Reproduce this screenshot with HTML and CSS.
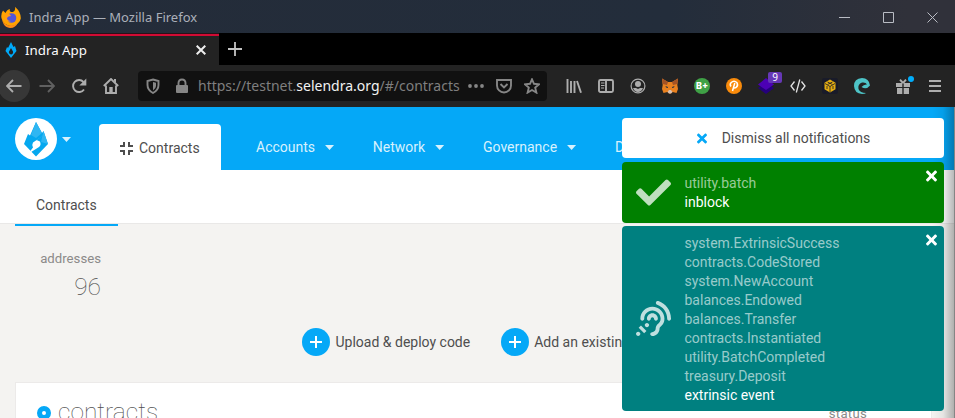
FILE: index.html
```html
<!DOCTYPE html>
<html lang="en">
<head>
<meta charset="utf-8">
<title>Indra App</title>
<link rel="stylesheet" href="styles.css">
</head>
<body>
<div class="window">
  <header class="titlebar">
    <svg class="firefox" viewBox="0 0 22 22"><path d="M3 3.500 5.500 6Q7 2.500 10 2 9 4 11 5 16 5 15-.2 21 5 20.800 11.500A9.900 9.900 0 1 1 3 3.500Z" fill="#ffa300"/><path d="M2 6Q.8 15 7 18 15 20 18 15 16 21 10 21 1 20 2 6Z" fill="#ff8d16"/><circle cx="11.500" cy="11" r="4.800" fill="#5355d9"/><path d="M5 8Q9 5 11 9 8 9 7 11 7 14 11 14 6 16 5 12Z" fill="#ff9c14"/></svg>
    <span class="window-title">Indra App — Mozilla Firefox</span>
    <div class="window-buttons">
      <svg viewBox="0 0 12 12"><path d="M0 6.500h11"/></svg>
      <svg viewBox="0 0 12 12"><path d="M.5 1.500h10v10H.5z"/></svg>
      <svg viewBox="0 0 12 12"><path d="M.5 1.500l10 10M10.500 1.500l-10 10"/></svg>
    </div>
  </header>
  <div class="tabs">
    <div class="tab">
      <svg class="favicon" viewBox="0 0 12 16"><path fill-rule="evenodd" d="M6 0 8.500 5 10 4 11.500 9 6 16 .5 9 2 5 3 6ZM6 6 3.800 10Q4 12 6 12.500 8.500 12 8 9.500Z" fill="#00aaf8"/></svg>
      <span>Indra App</span>
      <svg class="tab-close" viewBox="0 0 10 10"><path d="M.7.700l8.600 8.600M9.300.700.700 9.300"/></svg>
    </div>
    <svg class="new-tab" viewBox="0 0 14 14"><path d="M7 0v14M0 7h14"/></svg>
  </div>
  <div class="toolbar">
    <div class="back"><svg class="ic" viewBox="0 0 16 16"><path d="M15.500 8H1M7 2 1 8l6 6"/></svg></div>
    <div class="cell"><svg class="ic dim" viewBox="0 0 16 16"><path d="M.5 8H15M9 2l6 6-6 6"/></svg></div>
    <div class="cell"><svg class="ic" viewBox="0 0 16 16"><path d="M13 11.500A6 6 0 1 1 12.500 4"/><path class="solid" d="M15.300.500v7H8.300z"/></svg></div>
    <div class="cell"><svg class="ic" viewBox="0 0 16 16"><path d="M.8 8 8 1l7.200 7M3 7.500V15h10V7.500"/><path class="solid" d="M6.300 9h3.400v6H6.300zM11 1h2v4l-2-2z"/></svg></div>
    <div class="urlbar">
      <svg class="ic shield" viewBox="0 0 16 16"><path d="M8 1.500 13.500 3v4q0 5-5.500 8-5.500-3-5.500-8V3z"/><path class="solid" d="M8 4l3 .8V8q0 2.500-3 4.500z"/></svg>
      <svg class="ic lock" viewBox="0 0 16 16"><path d="M4.500 7V5q0-3.500 3.500-3.500T11.500 5v2"/><rect class="solid" x="2" y="7" width="12" height="8" rx="1"/></svg>
      <span class="url">https://testnet.<b>selendra.org</b>/#/contracts</span>
      <svg class="ic dots" viewBox="0 0 16 16"><g class="solid"><circle cx="2" cy="8" r="1.900"/><circle cx="8" cy="8" r="1.900"/><circle cx="14" cy="8" r="1.900"/></g></svg>
      <svg class="ic pocket" viewBox="0 0 16 16"><path d="M1 2h14v5.500a7 7 0 0 1-14 0zM4.500 6 8 9.500 11.500 6"/></svg>
      <svg class="ic star" viewBox="0 0 16 16"><path d="M8 1.300l2 4.500 5 .5-3.800 3.300 1.200 5L8 12l-4.400 2.600 1.200-5L1 6.300l5-.5z"/></svg>
    </div>
    <div class="extensions">
      <div class="cell"><svg class="ic" viewBox="0 0 16 16"><path d="M1.500 1v14M5 3v12M8.500 3v12M11 3l4 11.700"/></svg></div>
      <div class="cell"><svg class="ic" viewBox="0 0 16 16"><rect x="1" y="2" width="14" height="12" rx="1.500"/><path d="M8 2v12"/><path class="thin" d="M3 5h3.500M3 7.500h3.500M3 10h3"/></svg></div>
      <div class="cell"><svg class="ic" viewBox="0 0 16 16"><circle class="thin" cx="8" cy="8" r="6.900"/><circle class="solid" cx="8" cy="6" r="3"/><path class="solid" d="M3 10h3l2 1 2-1h3q-1.500 4-5 4t-5-4z"/></svg></div>
      <div class="cell"><svg class="ic" viewBox="0 0 16 16"><g stroke="none"><path d="M0 .5 6 4h4l6-3.500-.7 6.500.7 4-1.500 4-4-1L9 15.500H7L5.500 14l-4 1L0 11l.7-4z" fill="#e9811f"/><path d="M0 .5 6 4 5 7 .8 6zM16 .5 10 4l1 3 4.200-1z" fill="#a45325"/><path d="M5.500 14 7 12h2l1.500 2L9 15.500H7z" fill="#d5bfb2"/><path d="M3.500 8 6 9v1L4 9.500zM12.500 8 10 9v1l2-.5z" fill="#273244"/></g></svg></div>
      <div class="cell"><span class="round green">B+</span></div>
      <div class="cell"><span class="round orange"><svg viewBox="0 0 16 16"><path d="M5 8.500Q3.500 6.500 5 4.800q3-3 6 0 1.500 3-1 4.700-1.500.8-3 0M8.800 5l-2.300 8"/></svg></span></div>
      <div class="cell stack"><svg class="ic" viewBox="0 0 16 16"><g stroke="none"><path d="M8 4l8 6-8 6-8-6z" fill="#25007c"/><path d="M8 0l8 6.500L8 12 0 6.500z" fill="#4c00b5"/></g></svg><span class="count">9</span></div>
      <div class="cell"><svg class="ic bright" viewBox="0 0 16 16"><path d="M4.500 3.500 1 8l3.500 4.500M11.500 3.500 15 8l-3.500 4.500M9.800 1.500l-3.500 13"/></svg></div>
      <div class="cell"><svg class="ic cube" viewBox="0 0 16 16"><rect width="16" height="16" rx="2" fill="#191b29" stroke="none"/><path d="M8 1.500l5.500 3.300v6.400L8 14.500l-5.500-3.300V4.800z" fill="#e3ad11" stroke="none"/><path d="M3 5.500l5 3 5-3M8 8.500V14M5.500 4l5 2.500M10.500 4l-5 2.500M5 8v3M11 8v3" stroke="#191b29" stroke-width=".8"/></svg></div>
      <div class="cell"><svg class="ic" viewBox="0 0 16 16"><path fill="#4ec4c7" stroke="none" d="M16 7.500Q15 0 8 0 0 .5 0 8q.5 7.500 8 8 3 0 4-1-6 0-7.500-4Q3.500 6 8 4.500 12 4 13 6.500 10 6 7.500 9q5 3 8.500-1.500z"/></svg></div>
      <div class="cell gift"><svg class="ic" viewBox="0 0 16 16"><path class="solid" d="M1 5h6.300v4H1zM8.700 5H15v4H8.700zM2 10h5.300v6H2zM8.700 10H14v6H8.700z"/><path d="M8 5 5 1.700M8 5l3-3.300"/></svg><i class="alert"></i></div>
      <div class="cell"><svg class="ic" viewBox="0 0 16 16"><path d="M2 3h12M2 8h12M2 13h12"/></svg></div>
    </div>
  </div>

  <main class="app">
    <nav class="menu">
      <div class="logo"><svg viewBox="0 0 42 42"><path d="M21 4l6 11 1.500-2L33 26 21 38.500 9 26l4-10 2 1.500z" fill="#05a8ef"/><path d="M21 4l6 11-6 5-5-3zM28.500 13 33 26l-7-2z" fill="#2fb6f2"/><path d="M29 17 18 24.500q-1.500 2.500 0 5l-5 6.500 11-7q2.500-2 1-5.500l-3.500-1.500z" fill="#fff"/><path d="M19 26.500l3.500-1.500.5 1.500-4 2z" fill="#fff"/></svg></div>
      <i class="caret logo-caret"></i>
      <div class="active-item"><svg viewBox="0 0 13 13"><path d="M0 4h4V0M9 0v4h4M0 9h4v4M9 13V9h4"/></svg><span>Contracts</span></div>
      <div class="menu-item">Accounts<i class="caret"></i></div>
      <div class="menu-item">Network<i class="caret"></i></div>
      <div class="menu-item">Governance<i class="caret"></i></div>
      <div class="menu-item">Developer<i class="caret"></i></div>
    </nav>
    <div class="subnav"><span>Contracts</span></div>
    <section class="summary"><h4>addresses</h4><strong>96</strong></section>
    <div class="actions">
      <button><svg viewBox="0 0 28 28"><path d="M14 8v12M8 14h12"/></svg><span>Upload &amp; deploy code</span></button>
      <button><svg viewBox="0 0 28 28"><path d="M14 8v12M8 14h12"/></svg><span>Add an existing contract</span></button>
    </div>
    <section class="table"><i class="ring"></i><h1>contracts</h1><span class="status">status</span></section>
  </main>
  <div class="edge"></div>

  <aside class="notifications">
    <div class="notice dismiss"><svg viewBox="0 0 352 512"><use href="#times"/></svg>Dismiss all notifications</div>
    <div class="notice success">
      <svg class="kind" viewBox="0 0 512 512"><path d="M173.898 439.404l-166.400-166.400c-9.997-9.997-9.997-26.206 0-36.204l36.203-36.204c9.997-9.998 26.207-9.998 36.204 0L192 312.690 432.095 72.596c9.997-9.997 26.207-9.997 36.204 0l36.203 36.204c9.997 9.997 9.997 26.206 0 36.204l-294.400 294.401c-9.998 9.997-26.207 9.997-36.204-.001z"/></svg>
      <div class="lines"><span>utility.batch</span><b>inblock</b></div>
      <svg class="close" viewBox="0 0 352 512"><path id="times" d="M242.720 256l100.070-100.070c12.280-12.280 12.280-32.190 0-44.480l-22.240-22.240c-12.280-12.280-32.190-12.280-44.480 0L176 189.280 75.930 89.210c-12.280-12.280-32.190-12.280-44.480 0L9.210 111.450c-12.280 12.280-12.280 32.190 0 44.480L109.280 256 9.210 356.070c-12.280 12.280-12.280 32.190 0 44.480l22.240 22.240c12.280 12.280 32.200 12.280 44.480 0L176 322.720l100.070 100.070c12.280 12.280 32.200 12.280 44.480 0l22.240-22.240c12.280-12.280 12.280-32.190 0-44.480L242.720 256z"/></svg>
    </div>
    <div class="notice event">
      <svg class="kind" viewBox="0 0 512 512"><path d="M216 260c0 15.464-12.536 28-28 28s-28-12.536-28-28c0-44.112 35.888-80 80-80s80 35.888 80 80c0 15.464-12.536 28-28 28s-28-12.536-28-28c0-13.234-10.767-24-24-24s-24 10.766-24 24zm24-176c-97.047 0-176 78.953-176 176 0 15.464 12.536 28 28 28s28-12.536 28-28c0-66.168 53.832-120 120-120s120 53.832 120 120c0 75.164-71.009 70.311-71.997 143.622L288 404c0 28.673-23.327 52-52 52-15.464 0-28 12.536-28 28s12.536 28 28 28c59.475 0 107.876-48.328 108-107.774.595-34.428 72-48.240 72-144.226 0-97.047-78.953-176-176-176zm-80 236c-17.673 0-32 14.327-32 32s14.327 32 32 32 32-14.327 32-32-14.327-32-32-32zM32 448c-17.673 0-32 14.327-32 32s14.327 32 32 32 32-14.327 32-32-14.327-32-32-32zm480-187.993c0-1.518-.012-3.025-.045-4.531C510.076 140.525 436.157 38.470 327.994 1.511c-14.633-4.998-30.549 2.809-35.550 17.442-5 14.633 2.810 30.549 17.442 35.550 85.906 29.354 144.610 110.513 146.077 201.953l.003.188c.026 1.118.033 2.236.033 3.363 0 15.464 12.536 28 28 28s28.001-12.536 28.001-28zM152.971 439.029l-80-80L39.030 392.970l80 80 33.941-33.941z"/></svg>
      <div class="lines"><span>system.ExtrinsicSuccess</span><span>contracts.CodeStored</span><span>system.NewAccount</span><span>balances.Endowed</span><span>balances.Transfer</span><span>contracts.Instantiated</span><span>utility.BatchCompleted</span><span>treasury.Deposit</span><b>extrinsic event</b></div>
      <svg class="close" viewBox="0 0 352 512"><use href="#times"/></svg>
    </div>
  </aside>
</div>
</body>
</html>
```
FILE: styles.css
```css
* { box-sizing: border-box; }
body { margin: 0; overflow: hidden; font-family: Roboto, sans-serif; font-size: 14px; color: #4e4e4e; }
svg { display: block; flex: none; }
.window { position: relative; width: 955px; height: 418px; overflow: hidden; display: flex; flex-direction: column; }

.titlebar { height: 33px; flex: none; display: flex; align-items: center; background: linear-gradient(90deg, #242c39 0%, #232d3b 70%, #30313a 95%); font-family: "Noto Sans", sans-serif; font-size: 13px; color: #abb0b9; }
.firefox { width: 22px; height: 22px; margin-top: 2px; }
.window-title { margin-left: 7px; }
.window-buttons { display: flex; gap: 32px; margin-left: auto; margin-right: 16px; padding-top: 1px; }
.window-buttons svg { width: 12px; height: 12px; fill: none; stroke: #b9bcc4; stroke-width: 1; }

.tabs { height: 32px; flex: none; display: flex; align-items: center; background: #000; font-family: "Noto Sans", sans-serif; }
.tab { width: 219px; height: 32px; display: flex; align-items: center; padding: 0 12px 0 5px; background: #232323; color: #fbfbfe; font-size: 13.300px; box-shadow: inset 0 1px #2b1118, inset 0 3px #d10b34; }
.favicon { width: 12px; height: 16px; margin: 2px 8px 0 0; }
.tab span { padding-top: 1px; }
.tab-close { width: 10px; height: 10px; margin-left: auto; margin-top: 2px; margin-right: 1px; stroke: #eee; stroke-width: 2; }
.new-tab { width: 14px; height: 14px; margin-left: 9px; stroke: #c4c4c4; stroke-width: 1.800; }

.toolbar { height: 42px; flex: none; display: flex; align-items: center; background: #232323; }
.ic { width: 16px; height: 16px; fill: none; stroke: #adadad; stroke-width: 1.900; }
.ic .solid { fill: #adadad; stroke: none; }
.ic .thin { stroke-width: 1.200; }
.ic.dim { stroke: #606060; }
.ic.bright { stroke: #e3e3e3; stroke-width: 1.300; }
.back { width: 32px; height: 32px; margin-left: -2px; margin-right: 1px; border-radius: 50%; background: #373737; display: grid; place-items: center; }
.cell { width: 32px; height: 32px; display: grid; place-items: center; }
.urlbar { width: 409px; height: 30px; margin-left: 11px; padding-left: 7px; border-radius: 4px; background: #111; display: flex; align-items: center; font-family: "Noto Sans", sans-serif; font-size: 14px; color: #7f7f7f; }
.urlbar .ic { stroke: #868686; }
.urlbar .ic .solid { fill: #868686; }
.lock { margin-left: 13px; }
.url { width: 262px; margin-left: 8px; margin-top: -1px; white-space: nowrap; }
.url b { font-weight: 400; color: #f2f2f2; }
.dots { margin-left: 8px; }
.pocket, .star { margin-left: 12px; }
.extensions { display: flex; margin-left: 11px; }
.round { width: 16px; height: 16px; border-radius: 50%; display: grid; place-items: center; color: #fff; font: 800 9px/16px Inter, sans-serif; }
.round svg { width: 16px; height: 16px; fill: none; stroke: #fff; stroke-width: 1.500; }
.green { background: #3fa146; }
.orange { background: #f98b0b; }
.stack, .gift { position: relative; }
.count { position: absolute; left: 18px; top: 2px; width: 14px; height: 11px; border-radius: 2px; background: #6638b6; color: #fff; font: 10px/11px "Noto Sans", sans-serif; text-align: center; }
.gift { margin-left: 9px; }
.alert { position: absolute; left: 21px; top: 6px; width: 6px; height: 6px; border-radius: 50%; background: #00adfb; }

.app { flex: 1; min-height: 0; background: #f4f3f1; overflow: hidden; }
.menu { height: 63px; display: flex; background: #05a8f7; color: #d8f1fd; overflow: hidden; }
.logo { width: 42px; height: 42px; margin: 11px 0 0 15px; border-radius: 50%; background: #fff; flex: none; }
.caret { display: block; width: 9px; height: 5px; background: #d8f1fd; clip-path: polygon(0 0, 100% 0, 50% 100%); flex: none; }
.logo-caret { margin: 30px 0 0 5px; }
.active-item { width: 122px; height: 46px; margin: 17px 0 0 28px; padding: 2px 0 0 21px; border-radius: 4px 4px 0 0; background: #fff; color: #4e4e4e; display: flex; align-items: center; flex: none; }
.active-item svg { width: 13px; height: 13px; margin-right: 6px; fill: none; stroke: #4e4e4e; stroke-width: 2; }
.menu-item { display: flex; align-items: center; height: 46px; margin: 17px 0 0 38.800px; flex: none; }
.menu-item .caret { margin-left: 10px; margin-top: 1px; }
.active-item + .menu-item { margin-left: 35px; }
.subnav { height: 54px; background: #fff; border-bottom: 1px solid #e9e8e7; padding-left: 15px; }
.subnav span { display: block; width: 103px; height: 56px; border-bottom: 2px solid #05a8f7; padding: 27px 0 0 21px; line-height: 16px; }
.summary { width: 101px; padding-top: 27px; height: 104px; text-align: right; color: #8b8a89; }
.summary h4 { margin: 0; font-weight: 400; font-size: 13.200px; line-height: 16px; }
.summary strong { display: block; margin-top: 6px; font-weight: 100; font-size: 24.500px; line-height: 28px; color: #4e4e4e; }
.actions { display: flex; gap: 30.500px; padding-left: 302px; height: 54px; white-space: nowrap; }
button { display: flex; gap: 5.500px; align-items: center; height: 28px; padding: 0; border: 0; background: none; font: 14px Roboto, sans-serif; color: #4e4e4e; flex: none; }
button svg { width: 28px; height: 28px; border-radius: 50%; background: #05a8f7; stroke: #fff; stroke-width: 2; }
.table { width: 917px; height: 80px; margin-left: 15px; border: 1px solid #eceae9; background: #fff; display: flex; padding: 15px 64px 0 21px; }
.ring { width: 14px; height: 14px; margin-top: 8px; border: 5px solid #05a8f7; border-radius: 50%; flex: none; }
h1 { margin: 0 0 0 7px; font-weight: 100; font-size: 24.500px; line-height: 28px; color: #4e4e4e; }
.status { margin-left: auto; margin-top: 8px; font-size: 13.200px; letter-spacing: .25px; line-height: 16px; color: #8b8a89; }
.edge { position: absolute; top: 107px; right: 0; bottom: 0; width: 23px; border-right: 1px solid #858585; background: linear-gradient(90deg, transparent, rgba(0,0,0,.06) 50%, rgba(0,0,0,.28)); }

.notifications { position: absolute; left: 622px; top: 118px; width: 322px; display: flex; flex-direction: column; }
.notice { position: relative; border-radius: 4px; display: flex; align-items: center; color: #fff; }
.dismiss { height: 40px; padding-left: 1px; justify-content: center; background: #fff; color: #4e4e4e; }
.dismiss svg { width: 10px; height: 15px; margin-right: 15px; fill: #05a8f7; }
.success { height: 61px; margin-top: 4px; background: green; }
.event { height: 185px; margin-top: 3px; background: teal; }
.kind { width: 35px; height: 35px; margin-left: 14px; fill: rgba(255,255,255,.75); }
.lines { margin-left: 13.500px; display: flex; flex-direction: column; line-height: 19px; color: rgba(255,255,255,.6); }
.event .lines { padding-top: 1px; }
.lines b { font-weight: 400; color: #fff; }
.close { position: absolute; right: 7px; top: 6px; width: 11px; height: 16px; fill: #fff; }
```
